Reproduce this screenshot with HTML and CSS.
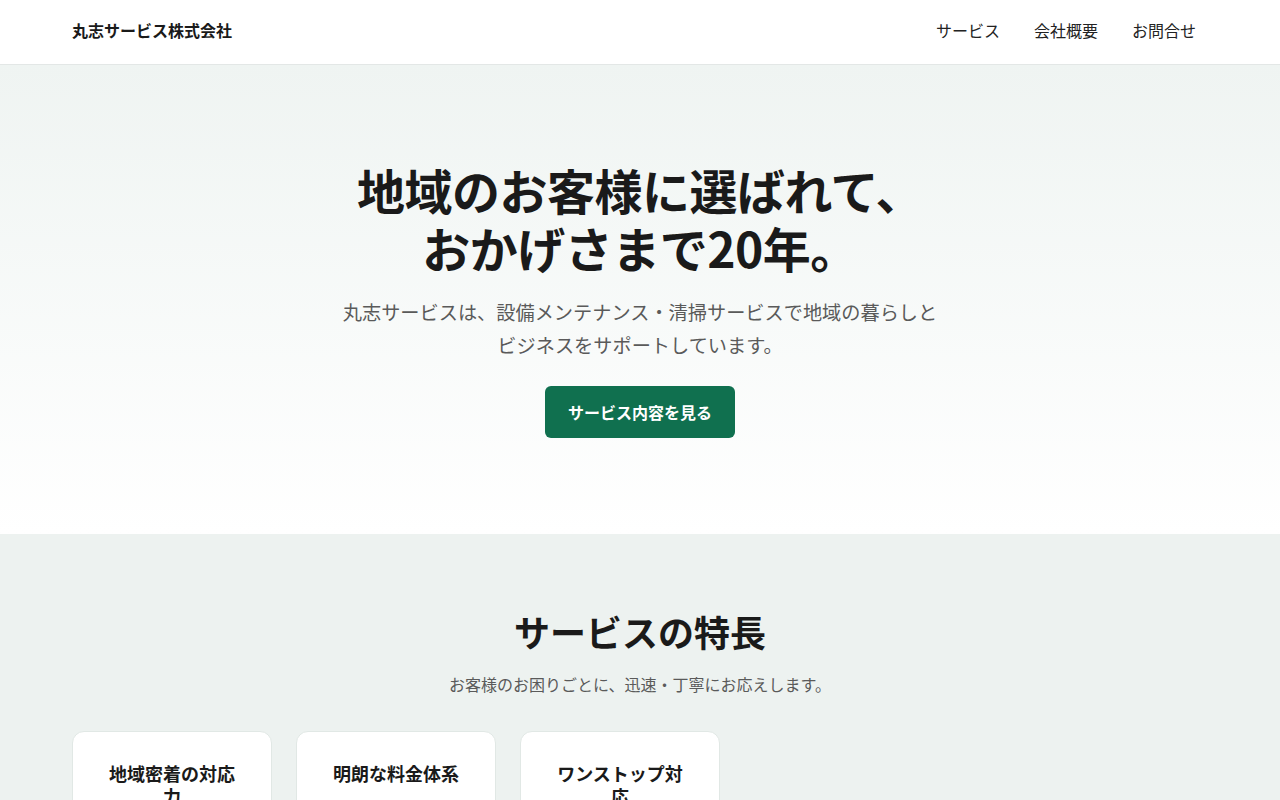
FILE: index.html
```html
<!DOCTYPE html>
<html lang="ja">
<head>
    <meta charset="utf-8">
    <title>丸志サービス株式会社</title>
    <link rel="stylesheet" href="styles.css">
</head>
<body>
<!-- Header -->
<header class="site-header">
    <div class="wrap header-inner">
        <a class="logo" href="#">丸志サービス株式会社</a>
        <nav class="nav">
            <a href="#service">サービス</a>
            <a href="#company">会社概要</a>
            <a href="#contact">お問合せ</a>
        </nav>
    </div>
</header>

<!-- Hero -->
<section class="hero">
    <h1>地域のお客様に選ばれて、<br>おかげさまで20年。</h1>
    <p class="hero-lead">丸志サービスは、設備メンテナンス・清掃サービスで地域の暮らしとビジネスをサポートしています。</p>
    <a class="btn" href="#service">サービス内容を見る</a>
</section>

<!-- Features -->
<section class="features" id="service">
    <div class="wrap">
        <h2>サービスの特長</h2>
        <p class="section-lead">お客様のお困りごとに、迅速・丁寧にお応えします。</p>
        <div class="cards">
            <div class="card">
                <h3>地域密着の対応力</h3>
                <p>市内全域、最短即日でお伺いします。</p>
            </div>
            <div class="card">
                <h3>明朗な料金体系</h3>
                <p>作業前にお見積りをご提示します。</p>
            </div>
            <div class="card">
                <h3>ワンストップ対応</h3>
                <p>点検から清掃まで一括でお任せください。</p>
            </div>
        </div>
    </div>
</section>
</body>
</html>
```

FILE: styles.css
```css
* {
    box-sizing: border-box;
}
body {
    margin: 0;
    font-family: "Noto Sans CJK JP", "Noto Sans", sans-serif;
    color: #1a1a1a;
    background: #fff;
}
a {
    color: inherit;
    text-decoration: none;
}
.wrap {
    max-width: 1136px;
    margin: 0 auto;
}

/* header */
.site-header {
    background: #fff;
    border-bottom: 1px solid #e3e7e6;
}
.header-inner {
    height: 64px;
    padding-bottom: 4px;
    display: flex;
    align-items: center;
    justify-content: space-between;
}
.logo {
    font-size: 16px;
    font-weight: 700;
}
.nav {
    display: flex;
    gap: 34px;
    margin-right: 12px;
}
.nav a {
    font-size: 16px;
    color: #222;
}

/* hero */
.hero {
    background: linear-gradient(180deg, #eff4f2 0%, #ffffff 100%);
    padding: 96px 20px;
    text-align: center;
}
.hero h1 {
    margin: 0 0 20px;
    font-size: 48px;
    line-height: 1.2;
    font-weight: 700;
    letter-spacing: -0.5px;
}
.hero-lead {
    max-width: 600px;
    margin: 0 auto 25px;
    font-size: 19.2px;
    line-height: 1.7;
    color: #5a5a5a;
}
.btn {
    display: inline-block;
    background: #10704f;
    color: #fff;
    font-size: 16px;
    font-weight: 700;
    line-height: 24px;
    padding: 14px 23px;
    border-radius: 6px;
}

/* features */
.features {
    background: #edf2f0;
    padding: 74px 0 80px;
    text-align: center;
}
.features h2 {
    margin: 0 0 17px;
    font-size: 36px;
    line-height: 1.3;
    font-weight: 700;
}
.section-lead {
    margin: 0 0 33px;
    font-size: 16px;
    line-height: 1.6;
    color: #5a5a5a;
}
.cards {
    display: flex;
    gap: 24px;
}
.card {
    width: 200px;
    background: #fff;
    border: 1px solid #e1e8e5;
    border-radius: 12px;
    padding: 30px 32px;
}
.card h3 {
    margin: 0 0 10px;
    font-size: 18px;
    line-height: 1.3;
    font-weight: 700;
}
.card p {
    margin: 0;
    font-size: 14px;
    line-height: 1.7;
    color: #666;
}
```
